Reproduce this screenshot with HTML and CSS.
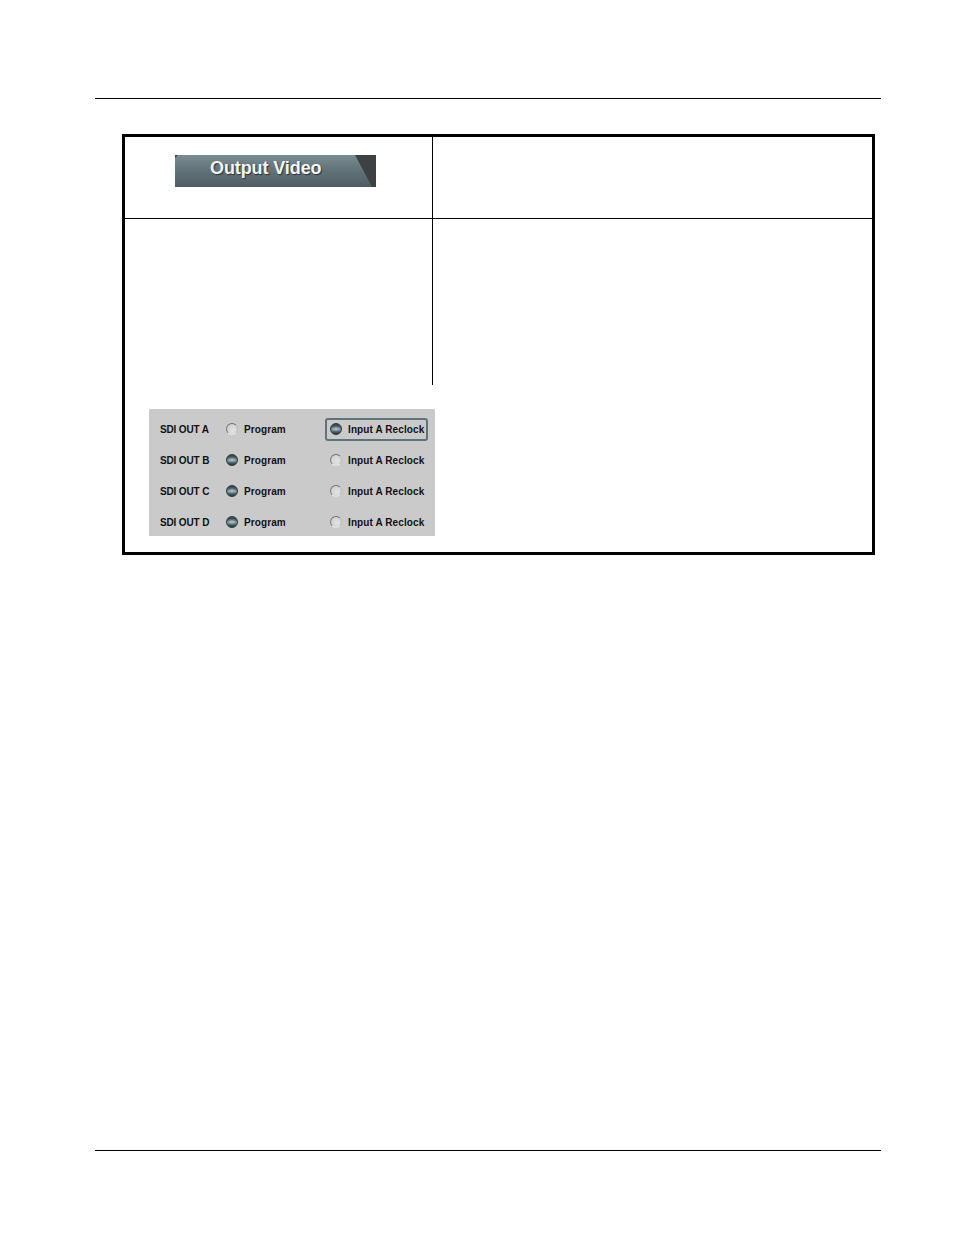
FILE: index.html
```html
<!DOCTYPE html>
<html lang="en">
<head>
<meta charset="utf-8">
<title>Output Video</title>
<link rel="stylesheet" href="styles.css">
</head>
<body>
<div class="page">
  <header class="page-header"></header>
  <main class="content">
    <div class="table">
      <div class="cell cell-tab">
        <div class="tab"><span class="tab-slab"></span><span class="tab-label">Output Video</span></div>
      </div>
      <div class="cell cell-desc"></div>
      <div class="cell cell-left"></div>
      <div class="cell cell-right"></div>
      <div class="cell cell-wide">
        <div class="panel">
          <div class="prow">
            <span class="plabel">SDI OUT A</span>
            <span class="opt"><i class="radio"></i>Program</span>
            <span class="opt opt2 focus"><i class="radio on"></i>Input A Reclock</span>
          </div>
          <div class="prow">
            <span class="plabel">SDI OUT B</span>
            <span class="opt"><i class="radio on"></i>Program</span>
            <span class="opt opt2"><i class="radio"></i>Input A Reclock</span>
          </div>
          <div class="prow">
            <span class="plabel">SDI OUT C</span>
            <span class="opt"><i class="radio on"></i>Program</span>
            <span class="opt opt2"><i class="radio"></i>Input A Reclock</span>
          </div>
          <div class="prow">
            <span class="plabel">SDI OUT D</span>
            <span class="opt"><i class="radio on"></i>Program</span>
            <span class="opt opt2"><i class="radio"></i>Input A Reclock</span>
          </div>
        </div>
      </div>
    </div>
  </main>
  <footer class="page-footer"></footer>
</div>
</body>
</html>
```

FILE: styles.css
```css
html, body {
  margin: 0;
  padding: 0;
  background: #ffffff;
}

body {
  font-family: "Liberation Sans", Arial, sans-serif;
  color: #000;
}

.page {
  min-height: 1235px;
  display: flex;
  flex-direction: column;
  margin: 0 73px 0 95px;
}

.page-header {
  height: 98px;
  border-bottom: 1px solid #000;
}

.content {
  flex: 1;
  padding: 35px 6px 0 27px;
}

.page-footer {
  height: 84px;
  border-top: 1px solid #000;
}

.table {
  border: 3px solid #000;
  display: grid;
  grid-template-columns: 308px 1fr;
  grid-template-rows: 82px 166px auto;
}

.cell-tab {
  border-right: 1px solid #000;
  border-bottom: 1px solid #000;
  padding: 18px 0 0 50px;
}

.cell-desc {
  border-bottom: 1px solid #000;
}

.cell-left {
  border-right: 1px solid #000;
}

.cell-wide {
  grid-column: 1 / 3;
  padding: 24px 0 16px 24px;
}

/* Output Video tab */
.tab {
  position: relative;
  width: 201px;
  height: 32px;
  background: #3e4143;
}

.tab-slab {
  position: absolute;
  inset: 0;
  background: linear-gradient(to bottom, #7a8d93 0%, #627379 45%, #4e5e64 100%);
  clip-path: polygon(0 3px, 3px 0, 180px 0, 197px 100%, 0 100%);
}

.tab-label {
  position: absolute;
  left: 35px;
  top: 3px;
  font-weight: bold;
  font-size: 18px;
  letter-spacing: -0.1px;
  color: #f2f4f4;
  text-shadow: 1px 1px 1px #2a3336;
}

/* Grey control panel */
.panel {
  width: 286px;
  height: 127px;
  box-sizing: border-box;
  background: #cacaca;
  padding: 8px 0 0 11px;
  display: flex;
  flex-direction: column;
  gap: 7px;
}

.prow {
  display: grid;
  grid-template-columns: 66px 99px auto;
  align-items: center;
  height: 24px;
  font-size: 10px;
  font-weight: bold;
  color: #111;
}

.plabel {
  letter-spacing: -0.15px;
}

.opt {
  display: flex;
  align-items: center;
  gap: 6px;
  letter-spacing: 0.1px;
}

.opt2 {
  height: 19px;
  width: 96px;
  padding: 0 0 0 3px;
  border: 2px solid transparent;
  border-radius: 3px;
}

.opt2.focus {
  border-color: #5d747a;
}

.radio {
  display: block;
  width: 10px;
  height: 10px;
  border-radius: 50%;
  border: 1px solid;
  border-color: #6f6f6f #bdbdbd #e6e6e6 #7c7c7c;
  background: radial-gradient(circle at 60% 60%, #e4e4e4 0%, #cdcdcd 80%);
  flex: none;
}

.radio.on {
  border-color: #2b383c;
  background:
    radial-gradient(ellipse 60% 30% at 50% 48%, rgba(190, 208, 214, 0.9) 0%, rgba(150, 170, 178, 0.5) 60%, rgba(0, 0, 0, 0) 100%),
    linear-gradient(to bottom, #34444a 0%, #4a5d63 35%, #7d9198 55%, #4a5e65 78%, #2b383c 100%);
}
```
